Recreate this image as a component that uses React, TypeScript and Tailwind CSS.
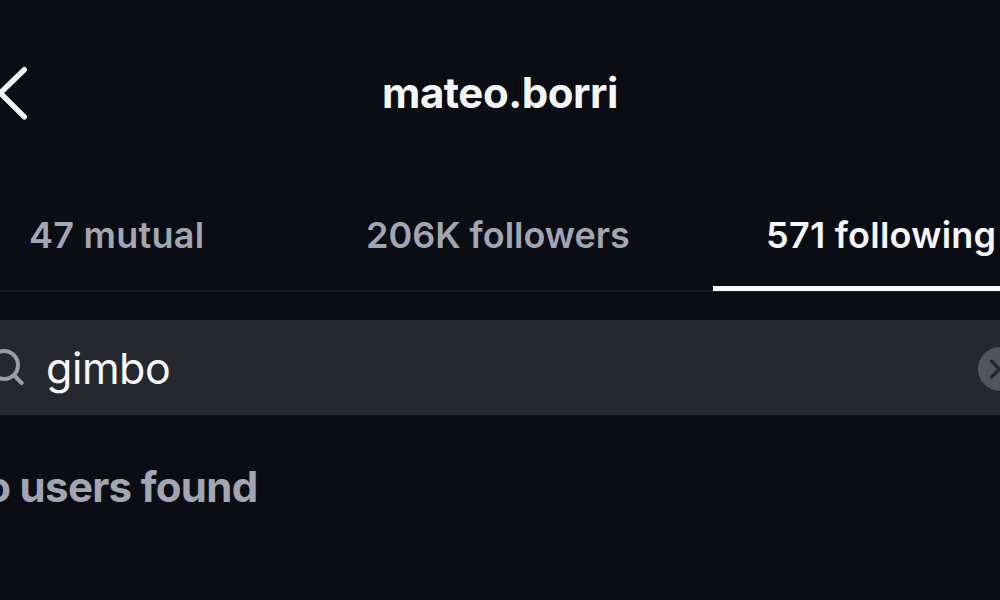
export default function App() {
  return (
    <main className="flex h-[600px] w-[1000px] flex-col overflow-hidden bg-[#0a0d14] font-['Inter',sans-serif] text-[#f5f6fa]">
      <header className="grid h-[186px] shrink-0 grid-cols-[100px_1fr_100px] items-center">
        <button aria-label="Back" className="h-[56px] w-[30px]">
          <svg width="30" height="56" viewBox="0 0 30 56" fill="none" stroke="currentColor" strokeWidth="5.4" strokeLinecap="round" strokeLinejoin="round"><path d="M24.3 4.7 0.2 28 24.3 51.8" /></svg>
        </button>
        <h1 className="text-center text-[42px] leading-none font-bold tracking-[-0.45px]">mateo.borri</h1>
      </header>
      <nav className="flex h-[106px] shrink-0 border-b-2 border-[#1a1d25] text-[36px] leading-none font-semibold tracking-[0.25px] text-[#a2a6b3]">
        <button className="h-[97px] w-[283px] pl-[29px] text-left whitespace-nowrap">47 mutual</button>
        <button className="h-[97px] w-[430px] pl-[83px] text-left tracking-[0px] whitespace-nowrap">206K followers</button>
        <button className="h-[105px] w-[287px] border-b-[5px] border-white pb-[3px] pl-[53px] text-left whitespace-nowrap text-[#f5f6fa]">571 following</button>
      </nav>
      <div className="mt-[28px] flex h-[95px] shrink-0 items-center bg-[#25282c]">
        <svg width="46" height="60" viewBox="0 0 46 60" fill="none" stroke="#9b9da8" strokeWidth="4" strokeLinecap="round"><circle cx="4" cy="27" r="14" /><path d="m14.3 37.5 7.4 7.5" /></svg>
        <span className="flex-1 pt-[2px] text-[43px] leading-none tracking-[-0.45px]">gimbo</span>
        <svg width="22" height="46" viewBox="0 0 22 46"><circle cx="22" cy="24" r="22" fill="#53555d" /><path d="m13.5 16 8 8-8 8" fill="none" stroke="#25282c" strokeWidth="3.5" strokeLinecap="round" /></svg>
      </div>
      <p className="mt-[51px] -ml-[46px] text-[42px] leading-none font-bold tracking-[-0.7px] whitespace-nowrap text-[#a2a6b3]">No users found</p>
    </main>
  );
}
